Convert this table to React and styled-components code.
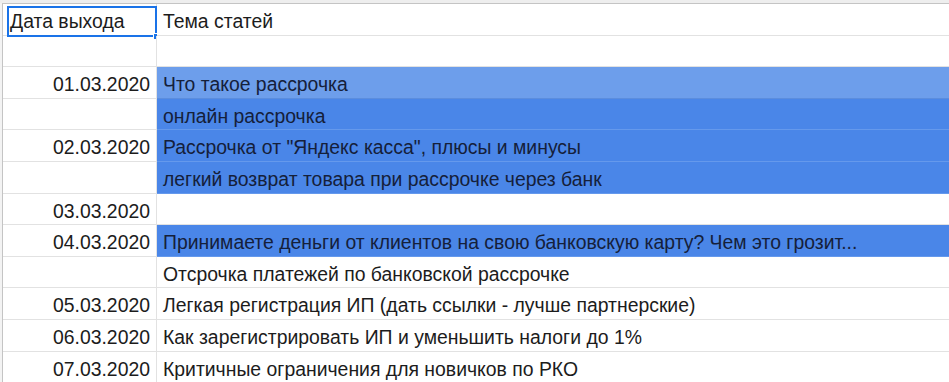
import React from "react";
import styled, { createGlobalStyle } from "styled-components";

const rows = [
  { date: "", topic: "", tone: null },
  { date: "01.03.2020", topic: "Что такое рассрочка", tone: "light" },
  { date: "", topic: "онлайн рассрочка", tone: "dark" },
  { date: "02.03.2020", topic: "Рассрочка от \"Яндекс касса\", плюсы и минусы", tone: "dark" },
  { date: "", topic: "легкий возврат товара при рассрочке через банк", tone: "dark" },
  { date: "03.03.2020", topic: "", tone: null },
  {
    date: "04.03.2020",
    topic: "Принимаете деньги от клиентов на свою банковскую карту? Чем это грозит...",
    tone: "dark",
  },
  { date: "", topic: "Отсрочка платежей по банковской рассрочке", tone: null },
  { date: "05.03.2020", topic: "Легкая регистрация ИП (дать ссылки - лучше партнерские)", tone: null },
  { date: "06.03.2020", topic: "Как зарегистрировать ИП и уменьшить налоги до 1%", tone: null },
  { date: "07.03.2020", topic: "Критичные ограничения для новичков по РКО", tone: null },
  { date: "", topic: "", tone: null },
];

const fills = {
  light: { bg: "#6d9eeb", line: "#5b8ddd" },
  dark: { bg: "#4a86e8", line: "#6599ec" },
};

const App = () => {
  return (
    <>
      <GlobalStyle />
      <Frame>
        <TopStrip />
        <Sheet>
          <Row>
            <DateCell $header>
              Дата выхода
              <Selection>
                <Handle />
              </Selection>
            </DateCell>
            <TopicCell>Тема статей</TopicCell>
          </Row>
          {rows.map((row, i) => (
            <Row key={i}>
              <DateCell>{row.date}</DateCell>
              <TopicCell $tone={row.tone}>{row.topic}</TopicCell>
            </Row>
          ))}
        </Sheet>
      </Frame>
    </>
  );
};

export default App;

const GlobalStyle = createGlobalStyle`
  html, body {
    margin: 0;
    padding: 0;
    background: #f3f3f3;
    overflow: hidden;
  }
  * {
    box-sizing: border-box;
  }
`;

const Frame = styled.div`
  width: 949px;
  height: 382px;
  display: flex;
  flex-direction: column;
  background: #f3f3f3;
  font-family: "Liberation Sans", Arial, sans-serif;
  font-size: 19.4px;
  color: #1c1c1c;
`;

const TopStrip = styled.div`
  height: 3px;
  flex-shrink: 0;
  background: #eeeeee;
`;

const Sheet = styled.div`
  flex: 1;
  margin-left: 2px;
  border-left: 1px solid #c4c4c4;
  border-top: 1px solid #c4c4c4;
  background: #fff;
  overflow: hidden;
`;

const Row = styled.div`
  display: grid;
  grid-template-columns: 154px 1fr;
  height: 31.6px;
`;

const Cell = styled.div`
  position: relative;
  height: 31.6px;
  padding: 5px 6px 0;
  line-height: 25px;
  white-space: nowrap;
  border-bottom: 1px solid #e2e2e2;
`;

const DateCell = styled(Cell)`
  text-align: ${(p) => (p.$header ? "left" : "right")};
  padding-left: ${(p) => (p.$header ? "7px" : "6px")};
  border-right: 1px solid #e2e2e2;
`;

const TopicCell = styled(Cell)`
  background: ${(p) => (p.$tone ? fills[p.$tone].bg : "#fff")};
  border-bottom-color: ${(p) => (p.$tone ? fills[p.$tone].line : "#e2e2e2")};
  color: ${(p) => (p.$tone ? "#15203a" : "#1c1c1c")};
`;

const Selection = styled.div`
  position: absolute;
  left: 4px;
  top: 2px;
  width: 150px;
  height: 31px;
  border: 2px solid #1a73e8;
  pointer-events: none;
`;

const Handle = styled.div`
  position: absolute;
  right: -5px;
  bottom: -5px;
  width: 7px;
  height: 7px;
  background: #1a73e8;
  border: 1px solid #fff;
`;
